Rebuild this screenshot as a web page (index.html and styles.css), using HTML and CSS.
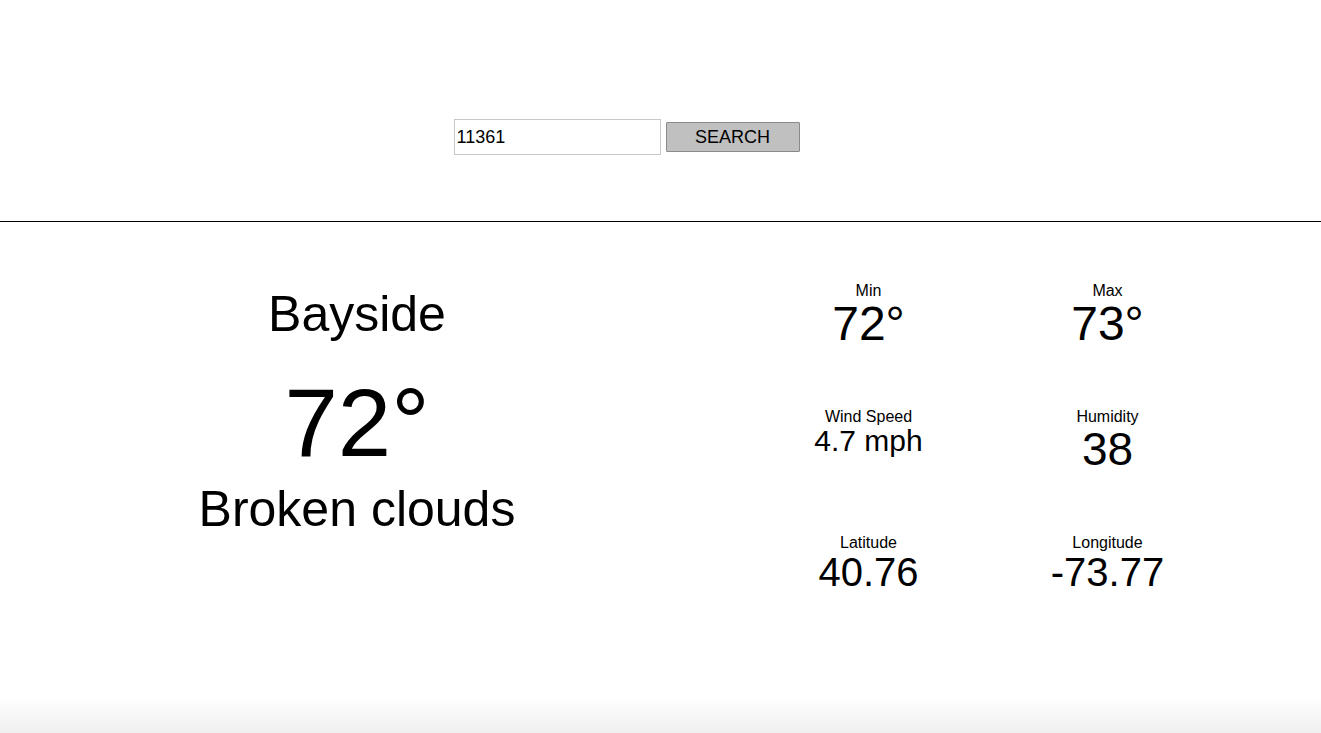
FILE: index.html
```html
<!DOCTYPE html>
<html lang="en">
<head>
<meta charset="utf-8">
<title>Weather</title>
<link rel="stylesheet" href="styles.css">
</head>
<body>
<header class="search-bar">
  <form class="search-form">
    <input class="search-input" type="text" value="11361">
    <button class="search-button" type="button">SEARCH</button>
  </form>
</header>
<main class="weather">
  <section class="current">
    <div class="city">Bayside</div>
    <div class="temp">72°</div>
    <div class="desc">Broken clouds</div>
  </section>
  <section class="details">
    <div class="stat"><div class="label">Min</div><div class="value v48">72°</div></div>
    <div class="stat"><div class="label">Max</div><div class="value v48">73°</div></div>
    <div class="stat"><div class="label">Wind Speed</div><div class="value v30">4.7 mph</div></div>
    <div class="stat"><div class="label">Humidity</div><div class="value v46">38</div></div>
    <div class="stat"><div class="label">Latitude</div><div class="value v40">40.76</div></div>
    <div class="stat"><div class="label">Longitude</div><div class="value v40">-73.77</div></div>
  </section>
</main>
</body>
</html>
```
FILE: styles.css
```css
html {
  height: 100%;
  background: linear-gradient(to bottom, #ffffff calc(100% - 36px), #efefef 100%);
}
body {
  margin: 0;
  font-family: "Liberation Sans", Arial, Helvetica, sans-serif;
  color: #000;
}
.search-bar {
  height: 222px;
  box-sizing: border-box;
  padding-top: 119px;
  border-bottom: 1px solid #000;
}
.search-form {
  display: flex;
  align-items: center;
  justify-content: center;
  gap: 5px;
  padding-right: 68px;
}
.search-input {
  box-sizing: border-box;
  width: 207px;
  height: 36px;
  border: 1px solid #c8c8c8;
  padding: 0 2px;
  font-family: inherit;
  font-size: 18px;
  color: #000;
  outline: none;
  margin: 0;
}
.search-button {
  box-sizing: border-box;
  width: 134px;
  height: 30px;
  background: #c0c0c0;
  border: 1px solid #8a8a8a;
  border-radius: 1px;
  font-family: inherit;
  font-size: 18px;
  color: #000;
  padding: 0;
  margin: 0;
}
.weather {
  display: grid;
  grid-template-columns: 714px 1fr;
  padding-top: 59.5px;
}
.current {
  display: flex;
  flex-direction: column;
  align-items: center;
  padding-top: 3px;
}
.city {
  font-size: 50px;
  line-height: 58px;
}
.temp {
  font-size: 96px;
  line-height: 96px;
  margin-top: 32.5px;
}
.desc {
  font-size: 50px;
  line-height: 58px;
  margin-top: 9px;
}
.details {
  display: grid;
  grid-template-columns: 239px 239px;
  grid-auto-rows: 126px;
  padding-left: 35px;
}
.stat {
  display: flex;
  flex-direction: column;
  align-items: center;
}
.label {
  font-size: 16px;
  line-height: 18px;
}
.value {
  line-height: 1;
}
.v48 { font-size: 48px; }
.v46 { font-size: 46px; }
.v40 { font-size: 40px; }
.v30 { font-size: 30px; }
```
